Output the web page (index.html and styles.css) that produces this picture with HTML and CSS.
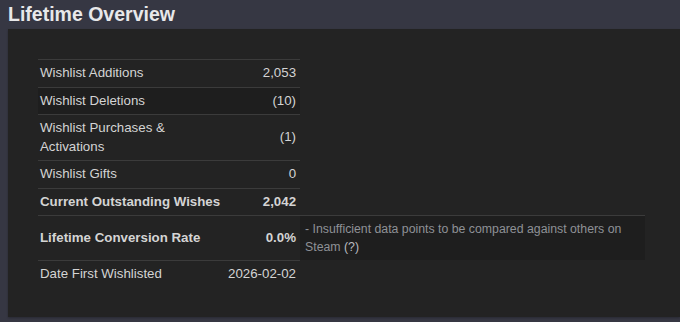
FILE: index.html
```html
<!DOCTYPE html>
<html lang="en">
<head>
    <meta charset="UTF-8">
    <meta name="viewport" content="width=device-width, initial-scale=1.0">
    <title>Lifetime Overview</title>
    <link rel="stylesheet" href="styles.css">
</head>
<body>
    <h2 class="section-title">Lifetime Overview</h2>

    <div class="section-panel">
        <table class="stats-table">
            <tr>
                <td class="stat-label">Wishlist Additions</td>
                <td class="stat-value">2,053</td>
                <td></td>
            </tr>
            <tr class="shaded">
                <td class="stat-label">Wishlist Deletions</td>
                <td class="stat-value">(10)</td>
                <td></td>
            </tr>
            <tr>
                <td class="stat-label">Wishlist Purchases &amp; Activations</td>
                <td class="stat-value">(1)</td>
                <td></td>
            </tr>
            <tr>
                <td class="stat-label">Wishlist Gifts</td>
                <td class="stat-value">0</td>
                <td></td>
            </tr>
            <tr class="strong">
                <td class="stat-label">Current Outstanding Wishes</td>
                <td class="stat-value">2,042</td>
                <td></td>
            </tr>
            <tr class="strong">
                <td class="stat-label">Lifetime Conversion Rate</td>
                <td class="stat-value">0.0%</td>
                <td class="stat-note">- Insufficient data points to be compared against others on Steam <span class="tooltip">(?)</span></td>
            </tr>
            <tr>
                <td class="stat-label">Date First Wishlisted</td>
                <td class="stat-value">2026-02-02</td>
                <td></td>
            </tr>
        </table>
    </div>
</body>
</html>
```

FILE: styles.css
```css
* {
    margin: 0;
    padding: 0;
    box-sizing: border-box;
}

body {
    font-family: "Liberation Sans", Arial, sans-serif;
    background: #363743;
    color: #d4d4d4;
    min-height: 100vh;
    overflow: hidden;
}

.section-title {
    font-size: 19.5px;
    font-weight: bold;
    color: #e8e8ea;
    line-height: 28px;
    padding-left: 8px;
    height: 29px;
}

.section-panel {
    margin-left: 8px;
    background: #232323;
    padding: 30px 0 30px 30px;
    box-shadow: 0 1px 2px rgba(0, 0, 0, 0.25);
}

.stats-table {
    border-collapse: collapse;
    font-size: 13.3px;
    line-height: 18.5px;
}

.stats-table td {
    padding: 4px 2px;
    vertical-align: middle;
}

.stat-label {
    width: 188px;
    border-top: 1px solid #3b3b3b;
}

.stat-value {
    width: 74px;
    text-align: right;
    padding-right: 4px !important;
    border-top: 1px solid #3b3b3b;
    white-space: nowrap;
}

.shaded td.stat-label,
.shaded td.stat-value {
    background: #1e1e1e;
}

.strong td {
    font-weight: bold;
    white-space: nowrap;
}

.stats-table td.stat-note {
    width: 345px;
    font-size: 12.3px;
    line-height: 18px;
    font-weight: normal;
    white-space: normal;
    color: #8e9196;
    background: #1e1e1e;
    border-top: 1px solid #3b3b3b;
    padding: 4px 8px 4px 5px;
}

.tooltip {
    color: #b9bcc0;
    cursor: help;
}
```
